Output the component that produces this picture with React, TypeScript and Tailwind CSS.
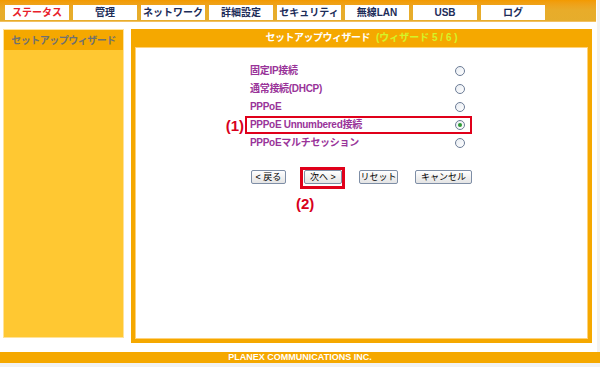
import React, { useState } from 'react';

const tabs = ['ステータス', '管理', 'ネットワーク', '詳細設定', 'セキュリティ', '無線LAN', 'USB', 'ログ'];

const options = [
  '固定IP接続',
  '通常接続(DHCP)',
  'PPPoE',
  'PPPoE Unnumbered接続',
  'PPPoEマルチセッション',
];

const font = "font-['Liberation_Sans','Noto_Sans_CJK_JP',sans-serif]";

const Btn: React.FC<{ label: string; w: string }> = ({ label, w }) => (
  <button
    className={`${w} h-[14px] flex items-center justify-center rounded-[2px] border border-[#7e8ea6] bg-gradient-to-b from-[#ffffff] to-[#e4e4e4] text-[9px] leading-none text-black`}
  >
    {label}
  </button>
);

const App: React.FC = () => {
  const [selected, setSelected] = useState(3);

  return (
    <div className={`w-[600px] h-[367px] bg-[#f2f2f2] flex flex-col overflow-hidden ${font}`}>
      <div className="w-[597px] h-[352px] bg-white flex flex-col">
        {/* top navigation */}
        <div className="w-[596px] h-[22px] bg-gradient-to-b from-[#f39a00] via-[#e8ac2a] to-[#e6ad2c] border-b border-[#f2c060] flex items-start pl-[5px] pt-[5px] gap-[4px]">
          {tabs.map((t, i) => (
            <div
              key={t}
              className={`w-[64px] h-[15px] bg-white flex items-center justify-center text-[10px] font-bold leading-none ${
                i === 0 ? 'text-[#e8202a]' : 'text-[#1c2c58]'
              }`}
            >
              {t}
            </div>
          ))}
        </div>

        <div className="flex mt-[7px] pl-[3px] gap-[7px]">
          {/* sidebar */}
          <div className="w-[121px] h-[309px] flex flex-col border border-[#ffe39a] bg-[#ffc832]">
            <div className="h-[20px] bg-[#f5a800] flex items-center justify-center text-[10px] font-bold text-[#707070] tracking-[-0.5px]">
              セットアップウィザード
            </div>
          </div>

          {/* main panel */}
          <div className="w-[461px] h-[314px] bg-[#f5a800] flex flex-col px-[4px] pb-[4px]">
            <div className="h-[18px] flex items-center justify-center gap-[6px] text-[10px] font-bold leading-none">
              <span className="text-white tracking-[-0.5px]">セットアップウィザード</span>
              <span className="text-[#d4f428]">(ウィザード 5 / 6 )</span>
            </div>
            <div className="flex-1 bg-white border border-[#ffd27a] flex flex-col pl-[109px] pt-[14px]">
              <div className="w-[227px] flex flex-col">
                {options.map((o, i) => (
                  <div
                    key={o}
                    onClick={() => setSelected(i)}
                    className={`relative h-[18px] flex items-center justify-between pl-[3px] pr-[5px] border-2 ${
                      i === 3 ? 'border-[#e0001a]' : 'border-transparent'
                    }`}
                  >
                    {i === 3 && (
                      <span className="absolute right-full mr-[3px] top-1/2 -translate-y-1/2 text-[15px] font-bold text-[#d8001c] leading-none">
                        (1)
                      </span>
                    )}
                    <span className="text-[10px] font-bold text-[#993399] leading-none tracking-[-0.3px]">{o}</span>
                    <span className="w-[10px] h-[10px] rounded-full border border-[#6c7c96] bg-gradient-to-br from-[#e8ecf2] to-white flex items-center justify-center">
                      {selected === i && <span className="w-[4px] h-[4px] rounded-full bg-[#2e9a36]" />}
                    </span>
                  </div>
                ))}
              </div>

              <div className="flex items-center mt-[18px] ml-[6px]">
                <Btn label="< 戻る" w="w-[35px]" />
                <div className="relative ml-[18px]">
                  <Btn label="次へ >" w="w-[38px]" />
                  <span className="absolute -left-[4px] -top-[3px] -right-[3px] -bottom-[5px] border-[3px] border-[#e0001a]" />
                  <span className="absolute top-full mt-[12px] -left-[8px] text-[15px] font-bold text-[#d8001c] leading-none">
                    (2)
                  </span>
                </div>
                <div className="ml-[17px]">
                  <Btn label="リセット" w="w-[39px]" />
                </div>
                <div className="ml-[17px]">
                  <Btn label="キャンセル" w="w-[57px]" />
                </div>
              </div>
            </div>
          </div>
        </div>
      </div>

      {/* footer */}
      <div className="w-[600px] h-[11px] bg-[#f5a800] flex items-center justify-center text-[9px] font-bold text-white leading-none">
        PLANEX COMMUNICATIONS INC.
      </div>
    </div>
  );
};

export default App;
